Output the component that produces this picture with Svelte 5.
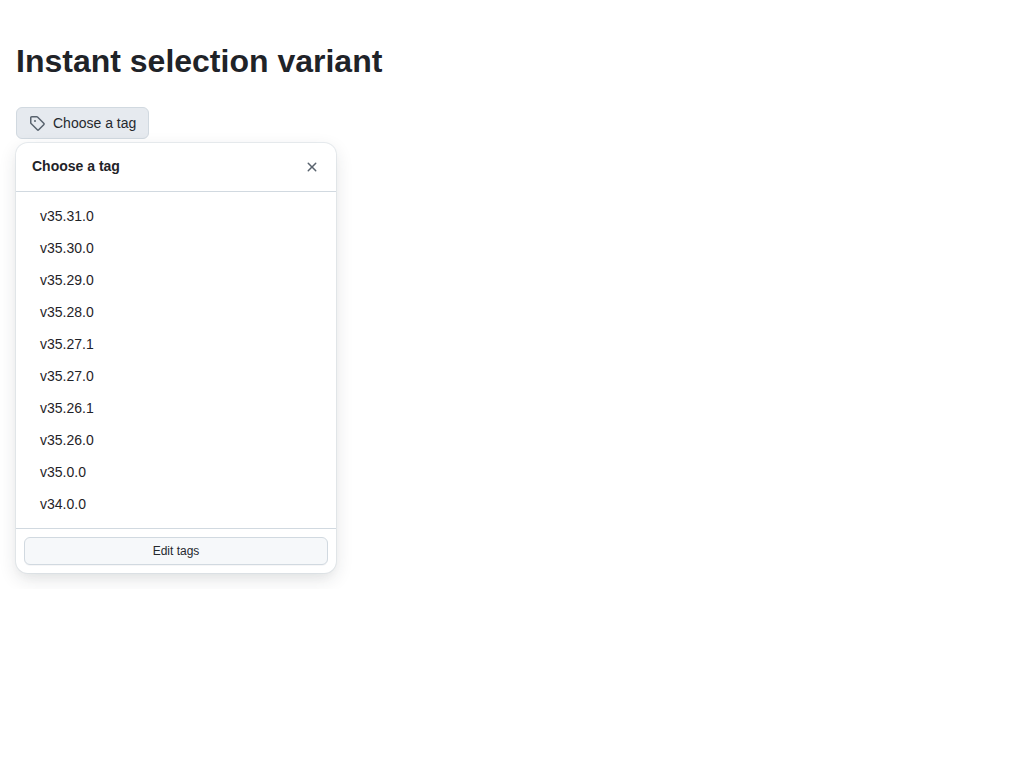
<script>
  const tags = ['v35.31.0', 'v35.30.0', 'v35.29.0', 'v35.28.0', 'v35.27.1', 'v35.27.0', 'v35.26.1', 'v35.26.0', 'v35.0.0', 'v34.0.0'];
</script>

<main>
  <h1>Instant selection variant</h1>
  <div class="picker">
    <button class="trigger" type="button" aria-haspopup="dialog" aria-expanded="true">
      <svg width="16" height="16" viewBox="0 0 16 16" fill="currentColor" aria-hidden="true">
        <path d="M1 7.775V2.75C1 1.784 1.784 1 2.75 1h5.025c.464 0 .91.184 1.238.513l6.25 6.25a1.75 1.75 0 0 1 0 2.474l-5.026 5.026a1.75 1.75 0 0 1-2.474 0l-6.25-6.25A1.752 1.752 0 0 1 1 7.775Zm1.5 0c0 .066.026.13.073.177l6.25 6.25a.25.25 0 0 0 .354 0l5.025-5.025a.25.25 0 0 0 0-.354l-6.25-6.25a.25.25 0 0 0-.177-.073H2.75a.25.25 0 0 0-.25.25ZM6 5a1 1 0 1 1 0 2 1 1 0 0 1 0-2Z" />
      </svg>
      <span>Choose a tag</span>
    </button>
    <div class="panel" role="dialog" aria-labelledby="panel-title">
      <header>
        <h2 id="panel-title">Choose a tag</h2>
        <button class="close" type="button" aria-label="Close">
          <svg width="16" height="16" viewBox="0 0 16 16" fill="currentColor" aria-hidden="true">
            <path d="M3.72 3.72a.75.75 0 0 1 1.06 0L8 6.94l3.22-3.22a.751.751 0 0 1 1.06 1.06L9.06 8l3.22 3.22a.751.751 0 0 1-1.06 1.06L8 9.06l-3.22 3.22a.751.751 0 0 1-1.06-1.06L6.94 8 3.72 4.78a.75.75 0 0 1 0-1.06Z" />
          </svg>
        </button>
      </header>
      <ul>
        {#each tags as tag}
          <li><button class="item" type="button">{tag}</button></li>
        {/each}
      </ul>
      <footer>
        <button class="edit" type="button">Edit tags</button>
      </footer>
    </div>
  </div>
</main>

<style>
  :global(body) {
    margin: 0;
    background: #fff;
    color: #1f2328;
    font-family: "Liberation Sans", Arial, sans-serif;
    font-size: 14px;
    line-height: 20px;
  }
  main {
    padding: 37px 16px 16px;
  }
  button {
    box-sizing: border-box;
    font: inherit;
    color: inherit;
    cursor: pointer;
  }
  h1 {
    margin: 0 0 22px;
    font-size: 32px;
    line-height: 48px;
    font-weight: 700;
  }
  .picker {
    display: flex;
    flex-direction: column;
    align-items: flex-start;
    gap: 4px;
  }
  .trigger {
    display: flex;
    align-items: center;
    gap: 8px;
    height: 32px;
    padding: 0 12px;
    border: 1px solid #d1d9e0;
    border-radius: 6px;
    background: #e6eaef;
    color: #25292e;
  }
  .trigger svg,
  .close svg {
    display: block;
    color: #59636e;
  }
  .panel {
    width: 100%;
    max-width: 320px;
    border-radius: 12px;
    background: #fff;
    box-shadow: 0 0 0 1px #d1d9e080, 0 6px 12px -3px #25292e0a, 0 6px 18px 0 #25292e1f;
  }
  header {
    display: flex;
    align-items: flex-start;
    justify-content: space-between;
    padding: 8px 8px 8px 16px;
    border-bottom: 1px solid #d1d9e0;
  }
  h2 {
    margin: 0;
    padding: 5px 0;
    font-size: 14px;
    line-height: 21px;
    font-weight: 700;
  }
  .close {
    display: grid;
    place-items: center;
    width: 32px;
    height: 32px;
    padding: 0;
    border: 0;
    border-radius: 6px;
    background: transparent;
  }
  ul {
    margin: 0;
    padding: 8px;
    list-style: none;
  }
  .item {
    display: block;
    width: 100%;
    padding: 6px 16px;
    border: 0;
    border-radius: 6px;
    background: transparent;
    text-align: left;
  }
  footer {
    padding: 8px;
    border-top: 1px solid #d1d9e0;
  }
  .edit {
    display: block;
    width: 100%;
    height: 28px;
    padding: 0 8px;
    border: 1px solid #d1d9e0;
    border-radius: 6px;
    background: #f6f8fa;
    box-shadow: 0 1px 0 #1f23280a;
    color: #25292e;
    font-size: 12px;
  }
</style>
